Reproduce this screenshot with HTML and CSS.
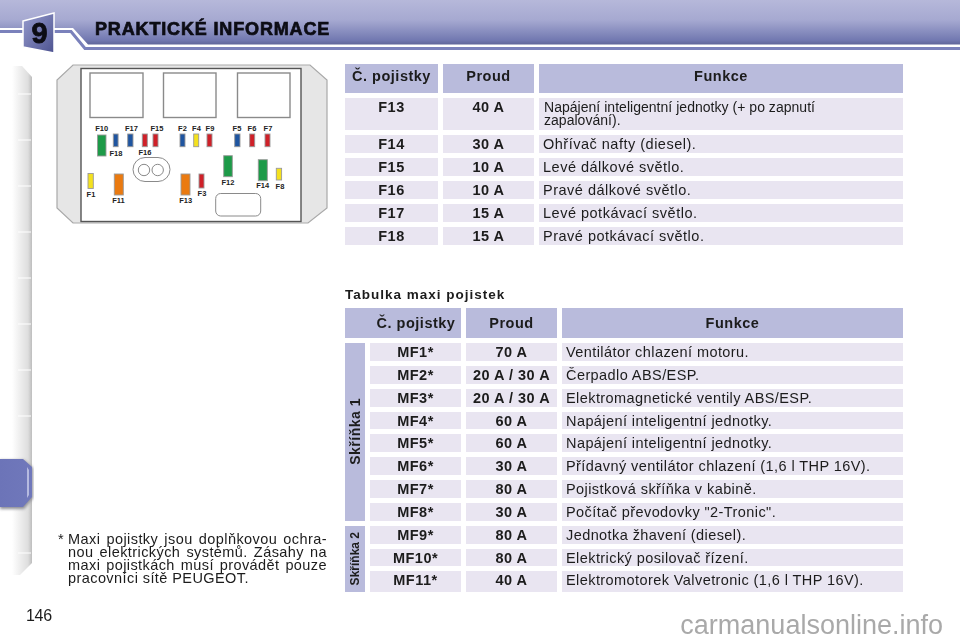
FILE: index.html
```html
<!DOCTYPE html>
<html lang="cs">
<head>
<meta charset="utf-8">
<title>Praktické informace</title>
<link rel="stylesheet" href="styles.css">
</head>
<body>
<div class="page">
  <header class="head">
    <svg class="head-art" width="960" height="60" viewBox="0 0 960 60" aria-hidden="true">
      <defs>
        <linearGradient id="band" x1="0" y1="0" x2="0" y2="1">
          <stop offset="0" stop-color="#b6b8da"/>
          <stop offset="0.45" stop-color="#a6a9d1"/>
          <stop offset="0.9" stop-color="#7279b1"/>
          <stop offset="1" stop-color="#5f6599"/>
        </linearGradient>
        <linearGradient id="tabfill" x1="0" y1="0" x2="1" y2="1">
          <stop offset="0" stop-color="#979cce"/>
          <stop offset="1" stop-color="#4d5390"/>
        </linearGradient>
      </defs>
      <polygon points="0,0 960,0 960,44.5 88,44.5 73,28 0,28" fill="url(#band)"/>
      <polyline points="0,31.5 71,31.5 85,48.5 960,48.5" fill="none" stroke="#7a81bb" stroke-width="3"/>
      <polygon points="23,21 54,13 54,53 23,47" fill="url(#tabfill)" stroke="#fff" stroke-width="1.5"/>
      <text x="39.5" y="43" class="chapter" text-anchor="middle">9</text>
    </svg>
    <h1 class="title">PRAKTICKÉ INFORMACE</h1>
  </header>

  <main class="main">
    <div class="rail">
      <svg width="34" height="524" viewBox="0 60 34 524" aria-hidden="true">
        <defs>
          <linearGradient id="railfill" x1="0" y1="0" x2="1" y2="0">
            <stop offset="0" stop-color="#ffffff"/>
            <stop offset="0.4" stop-color="#eeeeee"/>
            <stop offset="0.8" stop-color="#dedede"/>
            <stop offset="1" stop-color="#bdbdbd"/>
          </linearGradient>
          <linearGradient id="tabshade" x1="0" y1="0" x2="1" y2="0">
            <stop offset="0" stop-color="#6c74b8"/>
            <stop offset="1" stop-color="#7078bb"/>
          </linearGradient>
          <filter id="soft" x="-20%" y="-20%" width="150%" height="140%"><feGaussianBlur stdDeviation="1.6"/></filter>
        </defs>
        <polygon points="12,66 22,66 32,77 32,563 20,575 12,575" fill="url(#railfill)"/>
        <g class="ticks">
          <line x1="18" x2="31" y1="94" y2="94"/>
          <line x1="18" x2="31" y1="140" y2="140"/>
          <line x1="18" x2="31" y1="186" y2="186"/>
          <line x1="18" x2="31" y1="232" y2="232"/>
          <line x1="18" x2="31" y1="278" y2="278"/>
          <line x1="18" x2="31" y1="324" y2="324"/>
          <line x1="18" x2="31" y1="370" y2="370"/>
          <line x1="18" x2="31" y1="416" y2="416"/>
          <line x1="18" x2="31" y1="553" y2="553"/>
        </g>
        <polygon points="0,460 24,460 33,468 33,498 24,509 0,509" fill="#8d8d94" filter="url(#soft)"/>
        <polygon points="0,459 23,459 32,467 32,497 23,507 0,507" fill="url(#tabshade)"/>
        <polygon points="27,467 29,470 29,495 27,498" fill="#b6bae0"/>
      </svg>
    </div>

    <div class="left">
      <svg class="fusebox" width="285" height="170" viewBox="0 0 285 170" role="img" aria-label="Schéma pojistkové skříňky">
        <polygon class="box-out" points="23,5 260,5 277,20 277,148 258,163 23,163 7,148 7,20"/>
        <rect class="box-in" x="31" y="8.500" width="220" height="153"/>
        <rect class="relay" x="40" y="13" width="53" height="44.500"/>
        <rect class="relay" x="113.500" y="13" width="52.500" height="44.500"/>
        <rect class="relay" x="187.500" y="13" width="52.500" height="44.500"/>

        <rect class="fuse green" x="47.500" y="75" width="8.500" height="21"/>
        <rect class="fuse blue" x="63.300" y="74" width="4.800" height="12.700"/>
        <rect class="fuse blue" x="77.700" y="74" width="5.300" height="12.700"/>
        <rect class="fuse red" x="92.300" y="74" width="5" height="12.700"/>
        <rect class="fuse red" x="103" y="74" width="5" height="12.700"/>
        <rect class="fuse blue" x="130" y="74" width="5" height="12.700"/>
        <rect class="fuse yellow" x="143.700" y="74" width="5" height="12.700"/>
        <rect class="fuse red" x="157" y="74" width="5" height="12.700"/>
        <rect class="fuse blue" x="184.700" y="74" width="5.300" height="12.700"/>
        <rect class="fuse red" x="199.700" y="74" width="5" height="12.700"/>
        <rect class="fuse red" x="215" y="74" width="5" height="12.700"/>
        <rect class="fuse yellow" x="38" y="113.500" width="5.300" height="15"/>
        <rect class="fuse orange" x="64.300" y="114" width="9" height="21"/>
        <rect class="fuse orange" x="131" y="114" width="9" height="21"/>
        <rect class="fuse red" x="149" y="114" width="5" height="14"/>
        <rect class="fuse green" x="173.700" y="95.700" width="8.600" height="21"/>
        <rect class="fuse green" x="208.300" y="99.700" width="9" height="21"/>
        <rect class="fuse yellow" x="226.300" y="108.300" width="5.300" height="11.700"/>

        <rect class="shape" x="83" y="97.500" width="37" height="24" rx="12"/>
        <circle class="shape" cx="94" cy="110" r="5.700"/>
        <circle class="shape" cx="107.700" cy="110" r="5.700"/>
        <rect class="shape" x="165.700" y="133.500" width="45" height="22.500" rx="5"/>

        <g class="labels">
          <text x="51.700" y="71">F10</text>
          <text x="66" y="96">F18</text>
          <text x="81.500" y="71">F17</text>
          <text x="95" y="95">F16</text>
          <text x="107" y="71">F15</text>
          <text x="132.500" y="71">F2</text>
          <text x="146.500" y="71">F4</text>
          <text x="160" y="71">F9</text>
          <text x="187" y="71">F5</text>
          <text x="202" y="71">F6</text>
          <text x="218" y="71">F7</text>
          <text x="41" y="137">F1</text>
          <text x="68.500" y="143">F11</text>
          <text x="135.700" y="143">F13</text>
          <text x="152" y="136">F3</text>
          <text x="178" y="125">F12</text>
          <text x="212.700" y="128">F14</text>
          <text x="230" y="129">F8</text>
        </g>
      </svg>

      <div class="note">
        <span class="star">*</span>
        <div class="note-lines">
          <p class="line">Maxi pojistky jsou doplňkovou ochra-</p>
          <p class="line">nou elektrických systémů. Zásahy na</p>
          <p class="line">maxi pojistkách musí provádět pouze</p>
          <p class="line last">pracovníci sítě PEUGEOT.</p>
        </div>
      </div>
    </div>

    <div class="right">
      <section class="tbl tbl-a">
        <div class="th top">Č. pojistky</div><div class="th top">Proud</div><div class="th top">Funkce</div>
        <div class="td b">F13</div><div class="td b">40 A</div><div class="td t tight">Napájení inteligentní jednotky (+ po zapnutí<br>zapalování).</div>
        <div class="td b">F14</div><div class="td b">30 A</div><div class="td t">Ohřívač nafty (diesel).</div>
        <div class="td b">F15</div><div class="td b">10 A</div><div class="td t">Levé dálkové světlo.</div>
        <div class="td b">F16</div><div class="td b">10 A</div><div class="td t">Pravé dálkové světlo.</div>
        <div class="td b">F17</div><div class="td b">15 A</div><div class="td t">Levé potkávací světlo.</div>
        <div class="td b">F18</div><div class="td b">15 A</div><div class="td t">Pravé potkávací světlo.</div>
      </section>

      <h2 class="subtitle">Tabulka maxi pojistek</h2>

      <section class="tbl tbl-b">
        <div class="th wide">Č. pojistky</div><div class="th">Proud</div><div class="th">Funkce</div>
        <div class="side side-1"><span>Skříňka 1</span></div>
        <div class="td b">MF1*</div><div class="td b">70 A</div><div class="td t2">Ventilátor chlazení motoru.</div>
        <div class="td b">MF2*</div><div class="td b">20 A / 30 A</div><div class="td t2">Čerpadlo ABS/ESP.</div>
        <div class="td b">MF3*</div><div class="td b">20 A / 30 A</div><div class="td t2">Elektromagnetické ventily ABS/ESP.</div>
        <div class="td b">MF4*</div><div class="td b">60 A</div><div class="td t2">Napájení inteligentní jednotky.</div>
        <div class="td b">MF5*</div><div class="td b">60 A</div><div class="td t2">Napájení inteligentní jednotky.</div>
        <div class="td b">MF6*</div><div class="td b">30 A</div><div class="td t2">Přídavný ventilátor chlazení (1,6 l THP 16V).</div>
        <div class="td b">MF7*</div><div class="td b">80 A</div><div class="td t2">Pojistková skříňka v kabině.</div>
        <div class="td b">MF8*</div><div class="td b">30 A</div><div class="td t2">Počítač převodovky "2-Tronic".</div>
        <div class="side side-2"><span>Skříňka 2</span></div>
        <div class="td b">MF9*</div><div class="td b">80 A</div><div class="td t2">Jednotka žhavení (diesel).</div>
        <div class="td b">MF10*</div><div class="td b">80 A</div><div class="td t2">Elektrický posilovač řízení.</div>
        <div class="td b">MF11*</div><div class="td b">40 A</div><div class="td t2">Elektromotorek Valvetronic (1,6 l THP 16V).</div>
      </section>
    </div>
  </main>

  <footer class="foot">
    <span class="pageno">146</span>
    <span class="mark">carmanualsonline.info</span>
  </footer>
</div>
</body>
</html>
```
FILE: styles.css
```css
* { box-sizing: border-box; }
html, body { margin: 0; padding: 0; background: #fff; }
body { font-family: "Liberation Sans", Arial, sans-serif; color: #1c1c1c; }
.page { width: 960px; height: 640px; overflow: hidden; display: flex; flex-direction: column; filter: blur(.4px); }

.head { position: relative; height: 60px; flex: none; padding: 19px 0 0 95px; }
.head-art { position: absolute; left: 0; top: 0; }
.chapter { font: bold 29px "Liberation Sans", sans-serif; fill: #0c0c14; stroke: #0c0c14; stroke-width: .8px; }
.title { position: relative; margin: 0; font-size: 18px; line-height: 20px; font-weight: bold; letter-spacing: .85px; color: #0d0d15; -webkit-text-stroke: .7px #0d0d15; white-space: nowrap; }

.main { flex: 1; display: flex; min-height: 0; }
.rail { width: 50px; flex: none; }
.rail svg { display: block; }
.ticks line { stroke: #fff; stroke-width: 1; }

.left { width: 285px; flex: none; display: flex; flex-direction: column; }
.fusebox { display: block; flex: none; }
.box-out { fill: #e6e6e6; stroke: #a9a9a9; stroke-width: 1.2; }
.box-in { fill: #fff; stroke: #555; stroke-width: 1.4; }
.relay { fill: #fff; stroke: #8a8a8a; stroke-width: 1.4; }
.fuse { stroke: #999; stroke-width: .9; }
.green { fill: #1d9a48; }
.blue { fill: #1f55a0; }
.red { fill: #cf2028; }
.yellow { fill: #f4e11e; }
.orange { fill: #ea7a10; }
.shape { fill: #fff; stroke: #8a8a8a; stroke-width: 1; }
.labels text { font: bold 7.500px "Liberation Sans", sans-serif; fill: #222; text-anchor: middle; }

.note { margin-top: auto; margin-bottom: 15px; margin-left: 8px; display: flex; font-size: 14.500px; line-height: 13px; letter-spacing: .42px; color: #1c1c1c; }
.star { width: 10px; flex: none; }
.note-lines { width: 259px; }
.line { margin: 0; text-align: justify; text-align-last: justify; white-space: normal; }
.line.last { text-align-last: left; }

.right { margin-left: 10px; padding-top: 4px; width: 558px; flex: none; }
.tbl { display: grid; column-gap: 5px; row-gap: 5px; }
.tbl-a { grid-template-columns: 93px 91px 364px; grid-template-rows: 29px 32px repeat(5, 18px); }
.tbl-b { grid-template-columns: 20px 91px 91px 341px; grid-template-rows: 30px repeat(10, 17.850px) 20.400px; }
.th, .td { font-size: 14.500px; letter-spacing: .5px; }
.th { background: #b9bbdc; font-weight: bold; text-align: center; line-height: 31px; }
.th.top { line-height: 24px; }
.th.wide { grid-column: span 2; padding-left: 26px; }
.td { background: #e9e5f1; line-height: 18px; }
.b { font-weight: bold; text-align: center; }
.t { padding-left: 4px; line-height: 13px; padding-top: 3px; letter-spacing: .5px; }
.t.tight { padding-left: 5px; font-size: 14px; letter-spacing: .03px; }
.t2 { padding-left: 4px; letter-spacing: .42px; }
.side { grid-column: 1; background: #b9bbdc; display: flex; align-items: center; justify-content: center; font-weight: bold; }
.side span { writing-mode: vertical-rl; transform: rotate(180deg); white-space: nowrap; }
.side-1 { grid-row: 2 / span 8; font-size: 14px; letter-spacing: .5px; }
.side-2 { grid-row: 10 / span 3; font-size: 12px; }

.subtitle { margin: 41px 0 5px; height: 17px; font-size: 13.500px; line-height: 17px; font-weight: bold; letter-spacing: 1px; color: #1c1c1c; }

.foot { height: 40px; flex: none; display: flex; justify-content: space-between; align-items: flex-start; padding: 3px 17px 0 26px; }
.pageno { font-size: 16px; line-height: 24px; margin-top: 1px; letter-spacing: -.3px; color: #1c1c1c; }
.mark { font-size: 27px; line-height: 30px; margin-top: 7px; color: #a9a9a9; }
```
